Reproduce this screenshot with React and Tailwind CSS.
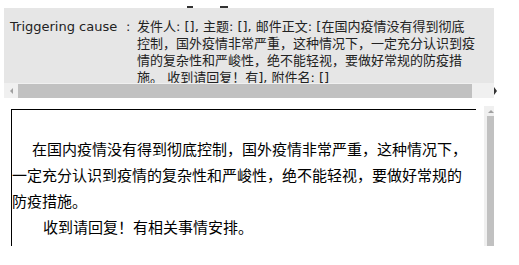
import React from "react";

const topLines = [
  "发件人: [], 主题: [], 邮件正文: [在国内疫情没有得到彻底",
  "控制，国外疫情非常严重，这种情况下，一定充分认识到疫",
  "情的复杂性和严峻性，绝不能轻视，要做好常规的防疫措",
  "施。 收到请回复！有], 附件名: []",
];

export default function App() {
  return (
    <div className="w-[519px] h-[265px] bg-white overflow-hidden">
      {/* clipped descenders of the row above */}
      <div className="h-[8px] flex items-end">
        <span className="ml-[187px] w-[6px] h-[2px] bg-[#333]" />
        <span className="ml-[27px] w-[8px] h-[2px] bg-[#333]" />
      </div>

      {/* detail row */}
      <div className="ml-[4px] w-[490px] h-[75px] bg-[#e6e6e6] overflow-hidden flex pt-[10px] text-[13px] leading-[17px] text-[#222] font-['DejaVu_Sans','Noto_Sans_CJK_SC',sans-serif]">
        <div className="w-[119px] pl-[6px] shrink-0 whitespace-nowrap">Triggering cause</div>
        <div className="w-[14px] pl-[3px] shrink-0">:</div>
        <div className="w-[350px] shrink-0">
          {topLines.map((l) => (
            <div key={l} className="whitespace-nowrap">{l}</div>
          ))}
        </div>
      </div>

      {/* horizontal scrollbar */}
      <div className="flex items-center h-[15px] w-[519px]">
        <div className="ml-[4px] w-[490px] h-[15px] bg-[#f0f0f0] flex items-center">
          <div className="w-[14px] flex justify-center">
            <span className="w-0 h-0 border-y-[3px] border-y-transparent border-r-[3px] border-r-[#a0a0a0]" />
          </div>
          <div className="w-[454px] h-[14px] bg-[#c1c1c1]" />
        </div>
        <span className="w-0 h-0 border-y-[4px] border-y-transparent border-l-[3px] border-l-[#333]" />
      </div>

      {/* content pane */}
      <div className="mt-[11px] flex">
        <div className="ml-[11px] w-[465px] h-[137px] border-l border-t border-black pt-[26px] text-[15px] leading-[26px] text-black font-['Noto_Sans_CJK_SC',sans-serif]">
          <div className="pl-[20px] whitespace-nowrap">在国内疫情没有得到彻底控制，国外疫情非常严重，这种情况下，</div>
          <div className="whitespace-nowrap">一定充分认识到疫情的复杂性和严峻性，绝不能轻视，要做好常规的</div>
          <div className="whitespace-nowrap">防疫措施。</div>
          <div className="pl-[31px] whitespace-nowrap">收到请回复！有相关事情安排。</div>
        </div>
        <div className="ml-[8px] -mt-[3px] w-[10px] h-[140px] flex">
          <div className="w-[3px] bg-[#f0f0f0]" />
          <div className="w-[7px] flex flex-col">
            <div className="h-[10px] bg-[#f0f0f0] flex items-center justify-center">
              <span className="w-0 h-0 border-x-[3px] border-x-transparent border-b-[3px] border-b-[#a0a0a0]" />
            </div>
            <div className="flex-1 bg-[#c1c1c1]" />
          </div>
        </div>
      </div>
    </div>
  );
}
